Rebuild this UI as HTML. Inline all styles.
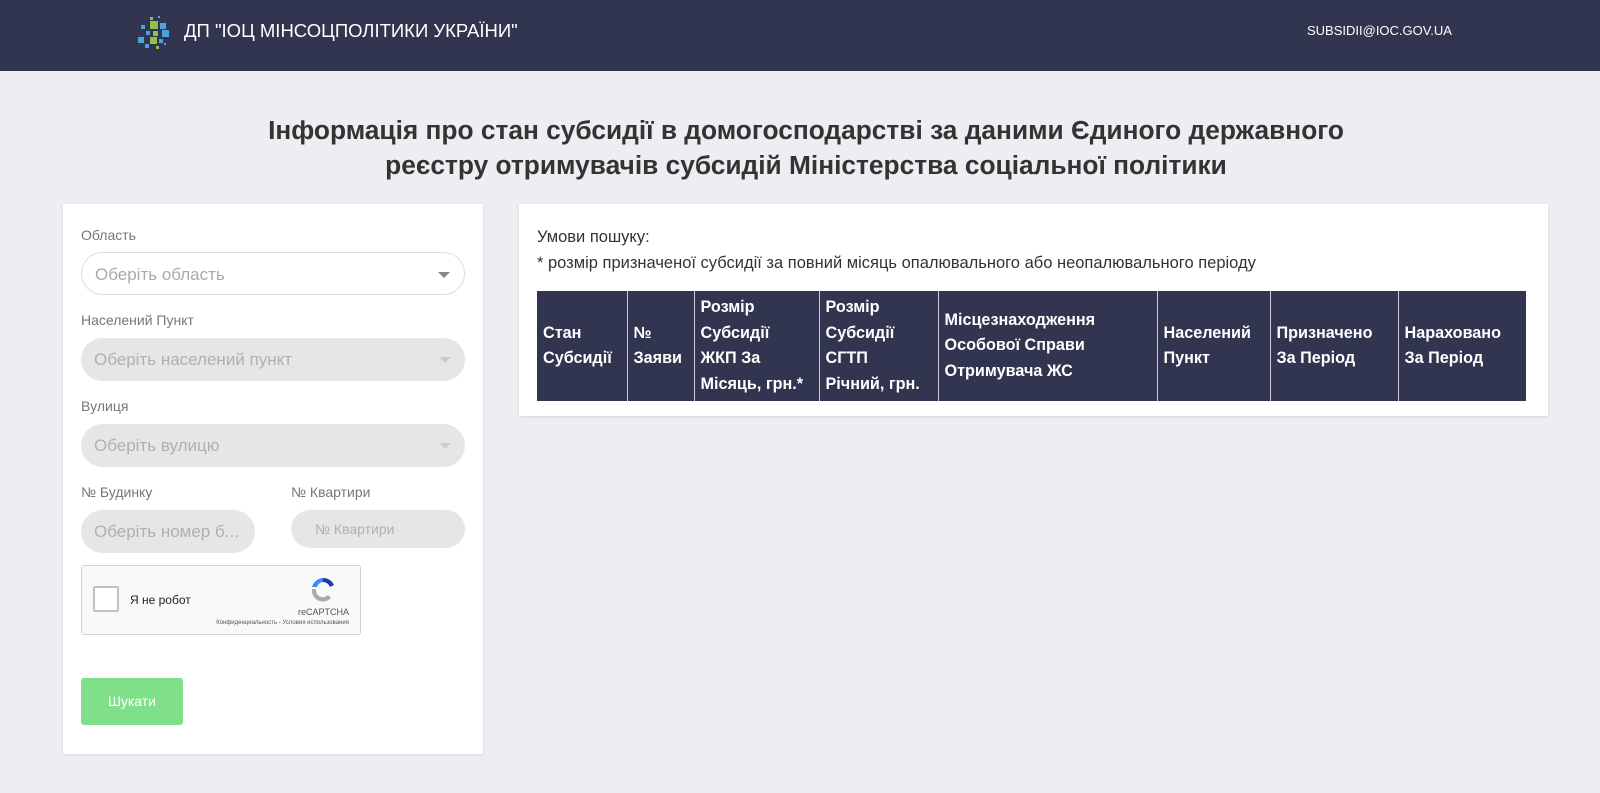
<!DOCTYPE html>
<html><head><meta charset="utf-8"><style>
*{box-sizing:border-box;margin:0;padding:0}
body{width:1600px;height:793px;background:#eceef2;font-family:"Liberation Sans",sans-serif;position:relative;overflow:hidden}
.hdr{position:absolute;left:0;top:0;width:1600px;height:71px;background:#32354f}
.brand{position:absolute;left:184px;top:20px;color:#fff;font-size:18.5px}
.mail{position:absolute;left:1307px;top:23px;color:#fff;font-size:13px}
h1{position:absolute;left:0;width:1600px;top:113px;text-align:center;font-size:26.3px;line-height:35px;color:#333;font-weight:bold;padding-left:12px}
.card{position:absolute;background:#fff;box-shadow:0 1px 3px rgba(0,0,0,.1)}
.lbl{position:absolute;font-size:14px;color:#777}
.sel{position:absolute;height:43px;border-radius:22px;font-size:17px;color:#aaa;padding:12px 13px;white-space:nowrap;overflow:hidden}
.sel.en{background:#fff;border:1px solid #ddd}
.sel.dis{background:#e6e6e6;color:#b0b0b0}
.car{position:absolute;right:14px;top:19px;border-left:6px solid transparent;border-right:6px solid transparent;border-top:6px solid #888}
.dis .car{border-top-color:#ccc}
table{position:absolute;left:18px;top:87px;border-collapse:collapse;background:#32354f;color:#fff;font-size:16.2px;font-weight:bold;line-height:25.5px}
td{border-right:1px solid #ccd;padding:0 6px;vertical-align:middle;height:110px}
td:last-child{border-right:none}
</style></head><body>
<div class="hdr">
<svg style="position:absolute;left:138px;top:14px" width="38" height="38" viewBox="0 0 38 38">
<rect x="12" y="3" width="3" height="3" fill="#8bc34a"/><rect x="20" y="2" width="2" height="2" fill="#4aa3df"/>
<rect x="12" y="7" width="8" height="8" fill="#8bc34a"/><rect x="22" y="9" width="6" height="6" fill="#4aa3df"/>
<rect x="3" y="11" width="4" height="4" fill="#4aa3df"/><rect x="8" y="17" width="4" height="4" fill="#4aa3df"/>
<rect x="15" y="17" width="5" height="5" fill="#8bc34a"/><rect x="24" y="16" width="7" height="7" fill="#4aa3df"/>
<rect x="0" y="23" width="6" height="6" fill="#4aa3df"/><rect x="12" y="23" width="7" height="7" fill="#8bc34a"/>
<rect x="21" y="25" width="4" height="4" fill="#4aa3df"/><rect x="7" y="30" width="4" height="4" fill="#4aa3df"/>
<rect x="18" y="32" width="3" height="3" fill="#8bc34a"/><rect x="26" y="29" width="2" height="2" fill="#4aa3df"/>
</svg>
<div class="brand">ДП "ІОЦ МІНСОЦПОЛІТИКИ УКРАЇНИ"</div>
<div class="mail">SUBSIDII@IOC.GOV.UA</div>
</div>
<h1>Інформація про стан субсидії в домогосподарстві за даними Єдиного державного<br>реєстру отримувачів субсидій Міністерства соціальної політики</h1>
<div class="card" style="left:63px;top:204px;width:420px;height:550px">
<div class="lbl" style="left:18px;top:23px">Область</div>
<div class="sel en" style="left:18px;top:48px;width:384px">Оберіть область<span class="car"></span></div>
<div class="lbl" style="left:18px;top:108px">Населений Пункт</div>
<div class="sel dis" style="left:18px;top:134px;width:384px">Оберіть населений пункт<span class="car"></span></div>
<div class="lbl" style="left:18px;top:194px">Вулиця</div>
<div class="sel dis" style="left:18px;top:220px;width:384px">Оберіть вулицю<span class="car"></span></div>
<div class="lbl" style="left:18px;top:280px">№ Будинку</div>
<div class="lbl" style="left:228px;top:280px">№ Квартири</div>
<div class="sel dis" style="left:18px;top:306px;width:174px">Оберіть номер б...</div>
<div class="sel dis" style="left:228px;top:306px;width:174px;height:38px;font-size:14px;padding:11px 24px">№ Квартири</div>
<div style="position:absolute;left:18px;top:361px;width:280px;height:70px;border:1px solid #d3d3d3;background:#f9f9f9;border-radius:3px">
<div style="position:absolute;left:11px;top:20px;width:26px;height:26px;border:2px solid #c1c1c1;background:#fff;border-radius:2px"></div>
<div style="position:absolute;left:48px;top:27px;font-size:12px;color:#222">Я не робот</div>
<svg style="position:absolute;left:226px;top:9px" width="30" height="30" viewBox="0 0 30 30"><path d="M15 3a12 12 0 0 1 11 7l-4 2a8 8 0 0 0-7-5z" fill="#1c3aa9"/><path d="M15 3a12 12 0 0 0-11 9h5a7 7 0 0 1 6-5z" fill="#4285f4"/><path d="M4 14a11 11 0 0 0 19 9l-3-3a7 7 0 0 1-12-6z" fill="#ababab"/></svg>
<div style="position:absolute;right:11px;top:41px;font-size:9px;color:#555">reCAPTCHA</div>
<div style="position:absolute;right:11px;top:54px;font-size:6px;color:#555">Конфиденциальность - Условия использования</div>
</div>
<div style="position:absolute;left:18px;top:474px;width:102px;height:47px;background:#80e08a;border-radius:3px;color:#fff;font-size:14px;text-align:center;line-height:47px">Шукати</div>
</div>
<div class="card" style="left:519px;top:204px;width:1029px;height:212px">
<div style="position:absolute;left:18px;top:20px;font-size:16.5px;color:#333;line-height:26px">Умови пошуку:<br>* розмір призначеної субсидії за повний місяць опалювального або неопалювального періоду</div>
<table><tr>
<td style="width:90px">Стан<br>Субсидії</td>
<td style="width:67px">№<br>Заяви</td>
<td style="width:125px">Розмір<br>Субсидії<br>ЖКП За<br>Місяць, грн.*</td>
<td style="width:119px">Розмір<br>Субсидії<br>СГТП<br>Річний, грн.</td>
<td style="width:219px">Місцезнаходження<br>Особової Справи<br>Отримувача ЖС</td>
<td style="width:113px">Населений<br>Пункт</td>
<td style="width:128px">Призначено<br>За Період</td>
<td style="width:128px">Нараховано<br>За Період</td>
</tr></table>
</div>
</body></html>
